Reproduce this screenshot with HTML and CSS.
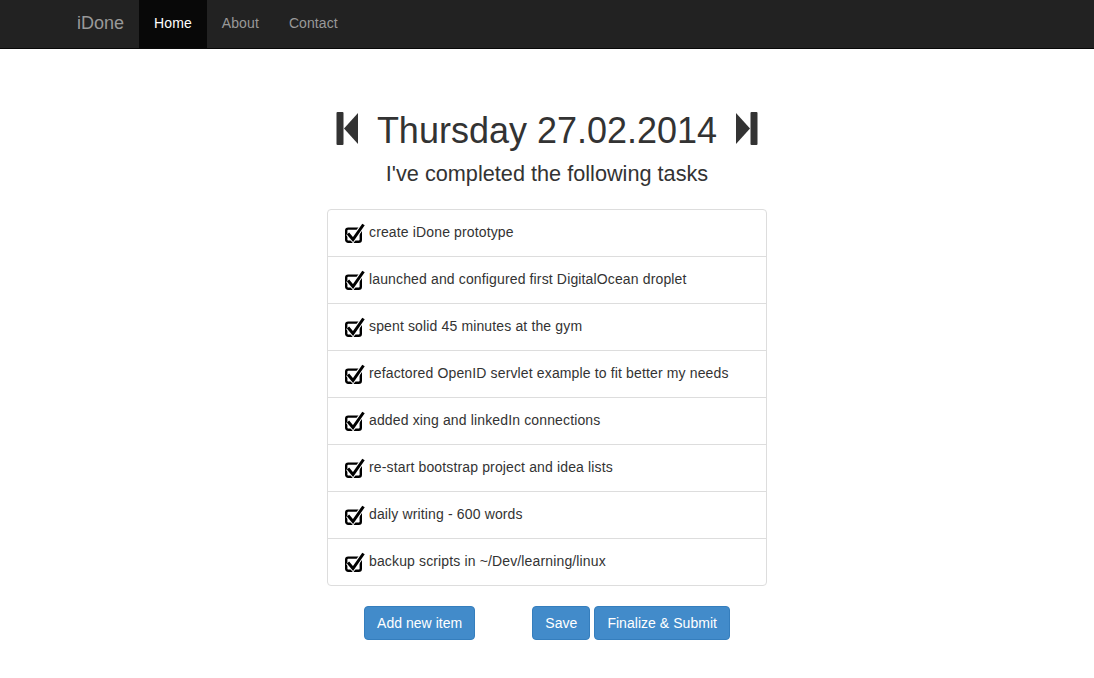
FILE: index.html
```html
<!DOCTYPE html>
<html>
<head>
<meta charset="utf-8">
<title>iDone</title>
<link rel="stylesheet" href="styles.css">
</head>
<body>
<nav class="navbar">
  <div class="nav-inner">
    <a class="brand" href="#">iDone</a>
    <ul class="nav">
      <li class="active"><a href="#">Home</a></li>
      <li><a href="#">About</a></li>
      <li><a href="#">Contact</a></li>
    </ul>
  </div>
</nav>
<main class="page">
  <h1 class="day">
    <svg class="step" width="22" height="34" viewBox="0 0 22 34"><rect x="0.5" y="0" width="7" height="33" rx="1" fill="#333"/><path d="M8 16.5 L22 1 L22 32 Z" fill="#333"/></svg>
    <span>Thursday 27.02.2014</span>
    <svg class="step" width="22" height="34" viewBox="0 0 22 34"><path d="M0 1 L14 16.5 L0 32 Z" fill="#333"/><rect x="14.5" y="0" width="7" height="33" rx="1" fill="#333"/></svg>
  </h1>
  <h3 class="sub">I've completed the following tasks</h3>
  <ul class="list">
    <li class="item"><svg class="check" width="21" height="22" viewBox="0 0 21 22"><rect x="2.2" y="6.6" width="14.6" height="13.2" rx="2" fill="none" stroke="#000" stroke-width="2.4"/><path d="M4 11.5 L9 17.5 L19.5 2.5" fill="none" stroke="#fff" stroke-width="5"/><path d="M4 11.5 L9 17.5 L19.5 2.5" fill="none" stroke="#000" stroke-width="3"/></svg><span>create iDone prototype</span></li>
    <li class="item"><svg class="check" width="21" height="22" viewBox="0 0 21 22"><rect x="2.2" y="6.6" width="14.6" height="13.2" rx="2" fill="none" stroke="#000" stroke-width="2.4"/><path d="M4 11.5 L9 17.5 L19.5 2.5" fill="none" stroke="#fff" stroke-width="5"/><path d="M4 11.5 L9 17.5 L19.5 2.5" fill="none" stroke="#000" stroke-width="3"/></svg><span>launched and configured first DigitalOcean droplet</span></li>
    <li class="item"><svg class="check" width="21" height="22" viewBox="0 0 21 22"><rect x="2.2" y="6.6" width="14.6" height="13.2" rx="2" fill="none" stroke="#000" stroke-width="2.4"/><path d="M4 11.5 L9 17.5 L19.5 2.5" fill="none" stroke="#fff" stroke-width="5"/><path d="M4 11.5 L9 17.5 L19.5 2.5" fill="none" stroke="#000" stroke-width="3"/></svg><span>spent solid 45 minutes at the gym</span></li>
    <li class="item"><svg class="check" width="21" height="22" viewBox="0 0 21 22"><rect x="2.2" y="6.6" width="14.6" height="13.2" rx="2" fill="none" stroke="#000" stroke-width="2.4"/><path d="M4 11.5 L9 17.5 L19.5 2.5" fill="none" stroke="#fff" stroke-width="5"/><path d="M4 11.5 L9 17.5 L19.5 2.5" fill="none" stroke="#000" stroke-width="3"/></svg><span>refactored OpenID servlet example to fit better my needs</span></li>
    <li class="item"><svg class="check" width="21" height="22" viewBox="0 0 21 22"><rect x="2.2" y="6.6" width="14.6" height="13.2" rx="2" fill="none" stroke="#000" stroke-width="2.4"/><path d="M4 11.5 L9 17.5 L19.5 2.5" fill="none" stroke="#fff" stroke-width="5"/><path d="M4 11.5 L9 17.5 L19.5 2.5" fill="none" stroke="#000" stroke-width="3"/></svg><span>added xing and linkedIn connections</span></li>
    <li class="item"><svg class="check" width="21" height="22" viewBox="0 0 21 22"><rect x="2.2" y="6.6" width="14.6" height="13.2" rx="2" fill="none" stroke="#000" stroke-width="2.4"/><path d="M4 11.5 L9 17.5 L19.5 2.5" fill="none" stroke="#fff" stroke-width="5"/><path d="M4 11.5 L9 17.5 L19.5 2.5" fill="none" stroke="#000" stroke-width="3"/></svg><span>re-start bootstrap project and idea lists</span></li>
    <li class="item"><svg class="check" width="21" height="22" viewBox="0 0 21 22"><rect x="2.2" y="6.6" width="14.6" height="13.2" rx="2" fill="none" stroke="#000" stroke-width="2.4"/><path d="M4 11.5 L9 17.5 L19.5 2.5" fill="none" stroke="#fff" stroke-width="5"/><path d="M4 11.5 L9 17.5 L19.5 2.5" fill="none" stroke="#000" stroke-width="3"/></svg><span>daily writing - 600 words</span></li>
    <li class="item"><svg class="check" width="21" height="22" viewBox="0 0 21 22"><rect x="2.2" y="6.6" width="14.6" height="13.2" rx="2" fill="none" stroke="#000" stroke-width="2.4"/><path d="M4 11.5 L9 17.5 L19.5 2.5" fill="none" stroke="#fff" stroke-width="5"/><path d="M4 11.5 L9 17.5 L19.5 2.5" fill="none" stroke="#000" stroke-width="3"/></svg><span>backup scripts in ~/Dev/learning/linux</span></li>
  </ul>
  <div class="actions">
    <button class="btn">Add new item</button>
    <div class="right">
      <button class="btn">Save</button>
      <button class="btn">Finalize &amp; Submit</button>
    </div>
  </div>
</main>
</body>
</html>
```
FILE: styles.css
```css
* { box-sizing: border-box; }
html, body { margin: 0; padding: 0; }
body {
  font-family: "Liberation Sans", Arial, sans-serif;
  font-size: 14px;
  line-height: 20px;
  color: #333;
  background: #fff;
}
.navbar {
  background: #222;
  border-bottom: 1px solid #080808;
  height: 49px;
}
.nav-inner {
  width: 970px;
  margin: 0 auto;
  display: flex;
  height: 48px;
}
.brand {
  display: block;
  padding: 13px 15px 15px;
  font-size: 18px;
  line-height: 20px;
  color: #999;
  text-decoration: none;
}
.nav {
  list-style: none;
  margin: 0;
  padding: 0;
  display: flex;
}
.nav a {
  display: block;
  padding: 13px 15px 15px;
  color: #999;
  text-decoration: none;
  line-height: 20px;
  letter-spacing: 0.1px;
}
.nav .active a {
  background: #080808;
  color: #fff;
}
.page {
  width: 440px;
  margin: 0 auto;
  padding-top: 61px;
}
.day {
  margin: 0;
  display: flex;
  justify-content: center;
  align-items: center;
  gap: 19px;
  font-size: 36px;
  font-weight: 400;
  line-height: 40px;
  height: 38px;
  white-space: nowrap;
  color: #333;
}
.day span { position: relative; top: 2px; }
.step { display: block; flex: none; }
.sub {
  margin: 14px 0 23px;
  text-align: center;
  font-size: 21.7px;
  font-weight: 400;
  line-height: 24px;
}
.list {
  list-style: none;
  margin: 0;
  padding: 0;
  border: 1px solid #ddd;
  border-radius: 4px;
}
.item {
  box-sizing: content-box;
  display: flex;
  align-items: center;
  height: 46px;
  padding: 0 15px 0 16px;
  border-top: 1px solid #ddd;
}
.item:first-child { border-top: none; }
.check { display: block; flex: none; margin-top: 0; }
.item span { margin-left: 4px; letter-spacing: 0.14px; position: relative; top: -1px; }
.actions {
  display: flex;
  justify-content: space-between;
  padding: 0 37px;
  margin-top: 20px;
}
.right { display: flex; gap: 4px; }
.btn {
  font-family: "Liberation Sans", Arial, sans-serif;
  font-size: 14px;
  line-height: 20px;
  padding: 6px 12px;
  letter-spacing: 0.04px;
  color: #fff;
  background: #428bca;
  border: 1px solid #357ebd;
  border-radius: 4px;
  cursor: pointer;
}
```
